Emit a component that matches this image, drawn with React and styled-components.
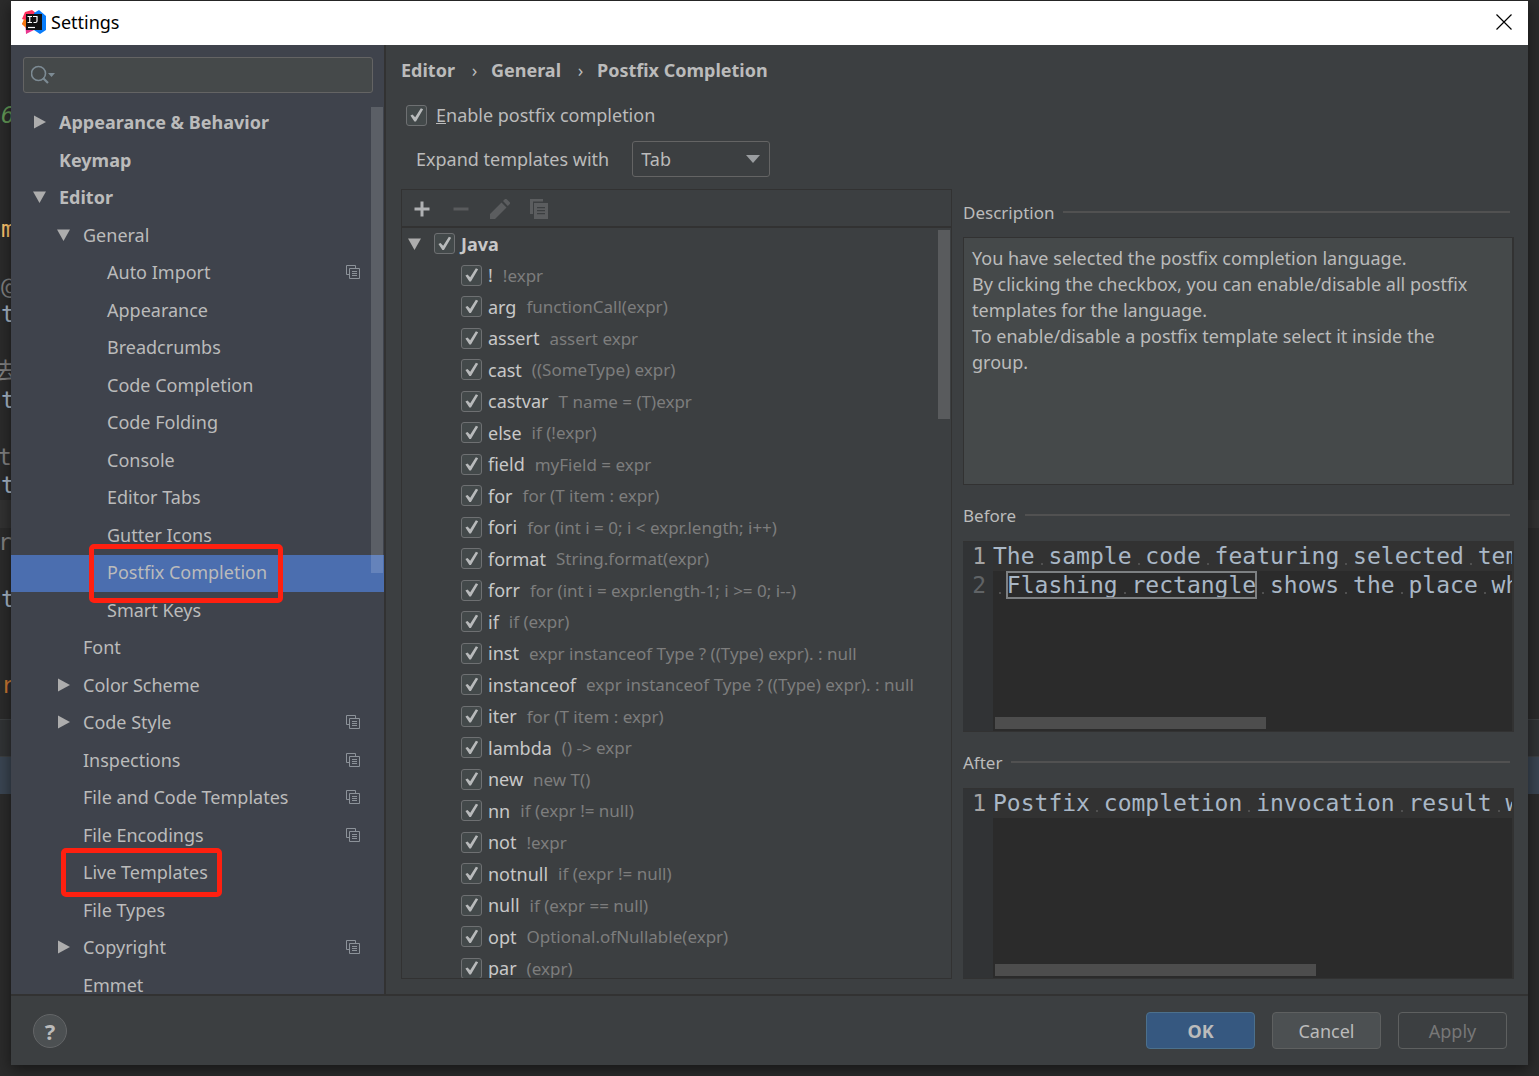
import React, { useState } from 'react';
import styled, { createGlobalStyle, css } from 'styled-components';

const tree = [
    { label: 'Appearance & Behavior', level: 0, arrow: 'right', bold: true },
    { label: 'Keymap', level: 0, bold: true },
    { label: 'Editor', level: 0, arrow: 'down', bold: true },
    { label: 'General', level: 1, arrow: 'down' },
    { label: 'Auto Import', level: 2, project: true },
    { label: 'Appearance', level: 2 },
    { label: 'Breadcrumbs', level: 2 },
    { label: 'Code Completion', level: 2 },
    { label: 'Code Folding', level: 2 },
    { label: 'Console', level: 2 },
    { label: 'Editor Tabs', level: 2 },
    { label: 'Gutter Icons', level: 2 },
    { label: 'Postfix Completion', level: 2, mark: 'large' },
    { label: 'Smart Keys', level: 2 },
    { label: 'Font', level: 1 },
    { label: 'Color Scheme', level: 1, arrow: 'right' },
    { label: 'Code Style', level: 1, arrow: 'right', project: true },
    { label: 'Inspections', level: 1, project: true },
    { label: 'File and Code Templates', level: 1, project: true },
    { label: 'File Encodings', level: 1, project: true },
    { label: 'Live Templates', level: 1, mark: 'small' },
    { label: 'File Types', level: 1 },
    { label: 'Copyright', level: 1, arrow: 'right', project: true },
    { label: 'Emmet', level: 1 },
];

const templates = [
    ['!', '!expr'],
    ['arg', 'functionCall(expr)'],
    ['assert', 'assert expr'],
    ['cast', '((SomeType) expr)'],
    ['castvar', 'T name = (T)expr'],
    ['else', 'if (!expr)'],
    ['field', 'myField = expr'],
    ['for', 'for (T item : expr)'],
    ['fori', 'for (int i = 0; i < expr.length; i++)'],
    ['format', 'String.format(expr)'],
    ['forr', 'for (int i = expr.length-1; i >= 0; i--)'],
    ['if', 'if (expr)'],
    ['inst', 'expr instanceof Type ? ((Type) expr). : null'],
    ['instanceof', 'expr instanceof Type ? ((Type) expr). : null'],
    ['iter', 'for (T item : expr)'],
    ['lambda', '() -> expr'],
    ['new', 'new T()'],
    ['nn', 'if (expr != null)'],
    ['not', '!expr'],
    ['notnull', 'if (expr != null)'],
    ['null', 'if (expr == null)'],
    ['opt', 'Optional.ofNullable(expr)'],
    ['par', '(expr)'],
];

// end of each editor line that shows left of the dialog
const behind = [
    { text: '6', color: '#629755', italic: true }, {}, {}, {},
    { text: 'm', color: '#ffc66d' }, {},
    { text: '@', color: '#808080' },
    { text: 't', color: '#a9b7c6' }, {},
    { text: '去', color: '#808080', indent: -6 },
    { text: 't', color: '#a9b7c6' }, {},
    { text: 't', color: '#808080', indent: -2 },
    { text: 't', color: '#a9b7c6' },
    { current: true },
    { text: 'r', color: '#808080', indent: -2 }, {},
    { text: 't', color: '#a9b7c6' }, {}, {},
    { text: 'r', color: '#cc7832' },
];

const Arrow = ({ dir }) => (
    <ArrowBox viewBox="0 0 18 18" aria-hidden="true">
        {dir === 'right' && <path d="M3 2.5 15 9 3 15.5z" />}
        {dir === 'down' && <path d="M2 3.500h13L8.500 15z" />}
    </ArrowBox>
);

const ProjectIcon = () => (
    <svg width="14" height="14" viewBox="0 0 14 14" fill="none" stroke="#8c9299" aria-hidden="true">
        <path d="M3 9.500H.5v-9h9V3" />
        <path d="M3.500 3.500h10v10h-10zM6 6.500h5M6 8.500h5M6 10.500h5" />
    </svg>
);

const Logo = () => (
    <svg width="24" height="24" viewBox="0 0 24 24" aria-hidden="true">
        <path d="M3 2 10 0l5 4-3 10-8 10 1-6-5-4 3-4-3-1z" fill="#fe315d" />
        <path d="M0 14 2 9l5 3v9L4 18z" fill="#f97a12" />
        <path d="M3.500 17 13 18l-1 2-8 4z" fill="#e8368f" />
        <path d="M12 3 17 0l7 6v14l-6 4-6-4z" fill="#087cfa" />
        <path d="M4 4h16v16H4z" fill="#111" />
        <path d="M6 17.500h7" stroke="#fff" strokeWidth="1.200" />
        <path d="M5.500 6.500h4.500M5.500 12.500h4.500M7.750 6.500v6M11 6.500h4v4.500q0 1.500-1.500 1.500H11.500" fill="none" stroke="#fff" strokeWidth="1.200" />
    </svg>
);

// words keep a faint dot in the blank between them, like the editor does
const Dotted = ({ children }) => children.split(' ').map((word, i) => (
    <React.Fragment key={i}>
        {i > 0 && <Blank> </Blank>}
        {word}
    </React.Fragment>
));

function Sidebar() {
    const [selected, setSelected] = useState('Postfix Completion');

    return (
        <SidePanel>
            <SearchBox>
                <svg width="28" height="20" viewBox="0 0 28 20" fill="none" stroke="#7d8b94" strokeWidth="1.600" aria-hidden="true">
                    <circle cx="7.500" cy="8.500" r="7" />
                    <path d="m12 13 5 5" strokeWidth="2.200" />
                    <path d="M17 8h7l-3.500 4z" fill="#7d8b94" stroke="none" />
                </svg>
                <input type="text" aria-label="Search settings" />
            </SearchBox>
            <Tree>
                {tree.map((item) => (
                    <TreeItem key={item.label + item.level}>
                        <TreeRow
                            type="button"
                            $level={item.level}
                            $bold={item.bold}
                            $active={item.label === selected}
                            onClick={() => setSelected(item.label)}
                        >
                            <Arrow dir={item.arrow} />
                            <TreeLabel>
                                {item.label}
                                {item.mark && <Mark $size={item.mark} />}
                            </TreeLabel>
                            {item.project && <ProjectIcon />}
                        </TreeRow>
                    </TreeItem>
                ))}
                <Thumb $top={2} $length={466} />
            </Tree>
        </SidePanel>
    );
}

function TemplateList() {
    return (
        <ListPanel>
            <Toolbar>
                <ToolButton type="button" aria-label="Add">
                    <svg width="20" height="20" viewBox="0 0 20 20" stroke="#afb1b3" strokeWidth="3"><path d="M10 2.500v15M2.500 10h15" /></svg>
                </ToolButton>
                <ToolButton type="button" aria-label="Remove" disabled>
                    <svg width="20" height="20" viewBox="0 0 20 20" stroke="#595b5d" strokeWidth="3"><path d="M2.500 10h15" /></svg>
                </ToolButton>
                <ToolButton type="button" aria-label="Edit" disabled>
                    <svg width="20" height="20" viewBox="0 0 20 20" fill="#5b5d5f"><path d="M0 20v-5L11.500 3.500l5 5L5 20zM13 2l2-2q1-.5 2 .5L19.500 3q1 1 .3 2l-2 2z" /></svg>
                </ToolButton>
                <ToolButton type="button" aria-label="Copy" disabled>
                    <svg width="20" height="20" viewBox="0 0 20 20" fill="#5b5d5f"><path d="M1 0h13v2.500H4V15H1z" /><path fillRule="evenodd" d="M5 4h14v16H5zM8 8v1.300h8V8zm0 3v1.300h8V11zm0 3v1.300h8V14z" /></svg>
                </ToolButton>
            </Toolbar>
            <Rows>
                <GroupRow>
                    <Arrow dir="down" />
                    <CheckLabel $bold>
                        <Check type="checkbox" defaultChecked />
                        Java
                    </CheckLabel>
                </GroupRow>
                {templates.map(([name, example]) => (
                    <TemplateRow key={name}>
                        <CheckLabel>
                            <Check type="checkbox" defaultChecked />
                            {name}
                            <Example>{example}</Example>
                        </CheckLabel>
                    </TemplateRow>
                ))}
                <Thumb $top={2} $length={189} />
            </Rows>
        </ListPanel>
    );
}

function App() {
    return (
        <Screen>
            <GlobalStyle />
            <Behind aria-hidden="true">
                {behind.map((line, i) => (
                    <BehindLine key={i} $current={line.current} $color={line.color} $italic={line.italic} $indent={line.indent}>
                        {line.text}
                    </BehindLine>
                ))}
                <BehindTabs />
                <BehindTool />
            </Behind>
            <Dialog>
                <TitleBar>
                    <Logo />
                    <h1>Settings</h1>
                    <CloseButton type="button" aria-label="Close">
                        <svg width="16" height="16" viewBox="0 0 16 16" stroke="#000" strokeWidth="1.200"><path d="m.5.5 15 15M15.500.5l-15 15" /></svg>
                    </CloseButton>
                </TitleBar>
                <Content>
                    <Sidebar />
                    <Main>
                        <Crumbs>
                            <span>Editor</span>
                            <Chevron />
                            <span>General</span>
                            <Chevron />
                            <span>Postfix Completion</span>
                        </Crumbs>
                        <EnableRow>
                            <Check type="checkbox" id="enable" defaultChecked />
                            <label htmlFor="enable"><u>E</u>nable postfix completion</label>
                        </EnableRow>
                        <ExpandRow>
                            <label htmlFor="expand">Expand templates with</label>
                            <SelectBox>
                                <select id="expand" defaultValue="Tab">
                                    <option>Tab</option>
                                    <option>Space</option>
                                    <option>Enter</option>
                                </select>
                                <svg width="14" height="8" viewBox="0 0 14 8" fill="#9a9da0" aria-hidden="true"><path d="M0 0h14L7 8z" /></svg>
                            </SelectBox>
                        </ExpandRow>
                        <Columns>
                            <TemplateList />
                            <Details>
                                <SectionTitle $first>Description</SectionTitle>
                                <Description>
                                    You have selected the postfix completion language.<br />
                                    By clicking the checkbox, you can enable/disable all postfix templates for the language.<br />
                                    To enable/disable a postfix template select it inside the group.
                                </Description>
                                <SectionTitle>Before</SectionTitle>
                                <Editor>
                                    <Gutter><b>1</b><span>2</span></Gutter>
                                    <Code>
                                        <CodeLine $current><Dotted>The sample code featuring selected template</Dotted></CodeLine>
                                        <CodeLine>
                                            <Blank> </Blank>
                                            <Flash><Dotted>Flashing rectangle</Dotted></Flash>
                                            <Dotted>{' shows the place where'}</Dotted>
                                        </CodeLine>
                                        <HorizontalThumb $length={271} />
                                    </Code>
                                </Editor>
                                <SectionTitle>After</SectionTitle>
                                <Editor>
                                    <Gutter><b>1</b></Gutter>
                                    <Code>
                                        <CodeLine $current><Dotted>Postfix completion invocation result will</Dotted></CodeLine>
                                        <HorizontalThumb $length={321} />
                                    </Code>
                                </Editor>
                            </Details>
                        </Columns>
                    </Main>
                </Content>
                <Footer>
                    <HelpButton type="button" aria-label="Help">?</HelpButton>
                    <Button type="button" $kind="primary">OK</Button>
                    <Button type="button">Cancel</Button>
                    <Button type="button" $kind="disabled" disabled>Apply</Button>
                </Footer>
            </Dialog>
        </Screen>
    );
}

export default App;

const GlobalStyle = createGlobalStyle`
    * {
        box-sizing: border-box;
    }
    body {
        margin: 0;
        background: #2b2b2b;
        color: #bbbbbb;
        font-family: 'Noto Sans', 'Open Sans', sans-serif;
        font-size: 18px;
    }
    button, input, select {
        font: inherit;
        color: inherit;
    }
`

const mono = css`
    font-family: 'DejaVu Sans Mono', 'Noto Sans CJK SC', monospace;
    font-size: 23px;
`

const Screen = styled.div`
    position: relative;
    display: flex;
    height: 100vh;
    min-height: 700px;
    padding: 1px 11px 11px;
    overflow: hidden;
`

const Behind = styled.div`
    position: absolute;
    inset: 0;
    padding-top: 101px;
    overflow: hidden;
`
const BehindLine = styled.div`
    ${mono}
    height: 28px;
    line-height: 28px;
    text-indent: ${props => props.$indent || 1}px;
    color: ${props => props.$color};
    font-style: ${props => props.$italic ? 'italic' : 'normal'};
    background: ${props => props.$current ? '#323232' : 'none'};

    &:nth-child(even) {
        height: 29px;
    }
`
const BehindTabs = styled.div`
    height: 38px;
    margin-top: 20px;
    border: solid #3c3f41;
    border-width: 1px 0;
    background: #313335;
`
const BehindTool = styled.div`
    height: 37px;
    background: #3a4552;
`

const Dialog = styled.div`
    position: relative;
    display: flex;
    flex: 1;
    flex-direction: column;
    min-width: 0;
    background: #3c3f41;
    box-shadow: 0 4px 14px rgba(0, 0, 0, .5);
`
const TitleBar = styled.div`
    display: flex;
    align-items: center;
    gap: 5px;
    height: 44px;
    flex-shrink: 0;
    padding: 0 16px 2px 11px;
    background: #fff;
    color: #000;

    h1 {
        margin: 0;
        font-size: 18px;
        font-weight: 400;
    }
`
const CloseButton = styled.button`
    display: flex;
    margin-left: auto;
    padding: 0;
    border: 0;
    background: none;
`
const Content = styled.div`
    display: flex;
    flex: 1;
    min-height: 0;
`

const SidePanel = styled.nav`
    display: flex;
    flex-direction: column;
    width: 375px;
    flex-shrink: 0;
    padding-top: 12px;
    border-right: 2px solid #323232;
    background: #3f434c;
`
const SearchBox = styled.label`
    display: flex;
    align-items: center;
    height: 36px;
    flex-shrink: 0;
    margin: 0 11px 0 12px;
    padding: 0 7px;
    border: 1px solid #646464;
    border-radius: 3px;
    background: #45494a;

    input {
        flex: 1;
        min-width: 0;
        border: 0;
        outline: 0;
        background: none;
    }
`
const Tree = styled.ul`
    position: relative;
    flex: 1;
    min-height: 0;
    margin: 12px 0 0;
    padding: 0;
    overflow: hidden;
    list-style: none;
`
const TreeItem = styled.li`
    height: 37px;

    &:nth-child(even) {
        height: 38px;
    }
`
const TreeRow = styled.button`
    display: flex;
    align-items: center;
    gap: 10px;
    width: 100%;
    height: 100%;
    padding: 0 24px 3px ${props => 20 + props.$level * 24}px;
    border: 0;
    background: ${props => props.$active ? '#4b6eaf' : 'none'};
    font-weight: ${props => props.$bold ? 700 : 400};
    text-align: left;
`
const TreeLabel = styled.span`
    position: relative;
    margin-right: auto;
    white-space: nowrap;
`
const Mark = styled.span`
    position: absolute;
    inset: ${props => props.$size === 'large' ? '-16px -16px -19px -18px' : '-12px -14px -13px -22px'};
    border: 5px solid #ff2010;
    border-radius: 5px;
    pointer-events: none;
    z-index: 1;
`
const ArrowBox = styled.svg`
    width: 18px;
    height: 18px;
    flex-shrink: 0;
    fill: #adadad;
`
const Thumb = styled.div`
    position: absolute;
    top: ${props => props.$top}px;
    right: 1px;
    width: 12px;
    height: ${props => props.$length}px;
    background: rgba(255, 255, 255, .15);
`

const Main = styled.main`
    display: flex;
    flex: 1;
    flex-direction: column;
    min-width: 0;
    padding: 12px 14px 15px 15px;
`
const Crumbs = styled.div`
    display: flex;
    align-items: center;
    height: 26px;
    font-weight: 700;
`
const Chevron = styled.span`
    width: 36px;
    padding-left: 3px;
    font-weight: 400;
    text-align: center;

    &::before {
        content: '›';
    }
`
const EnableRow = styled.div`
    display: flex;
    align-items: center;
    gap: 9px;
    height: 22px;
    margin: 21px 0 15px 5px;
`
const ExpandRow = styled.div`
    display: flex;
    align-items: center;
    gap: 23px;
    margin: 0 0 12px 15px;
`
const SelectBox = styled.div`
    position: relative;

    select {
        appearance: none;
        display: block;
        width: 138px;
        height: 36px;
        padding: 0 8px;
        border: 1px solid #646464;
        border-radius: 3px;
        background: #3c3f41;
    }
    svg {
        position: absolute;
        top: 14px;
        right: 10px;
        pointer-events: none;
    }
`
const Columns = styled.div`
    display: grid;
    grid-template-columns: minmax(0, 1fr) minmax(0, 1fr);
    grid-template-rows: minmax(0, 1fr);
    flex: 1;
    gap: 11px;
    min-height: 0;
`

const ListPanel = styled.section`
    display: flex;
    flex-direction: column;
    border: 1px solid #323232;
`
const Toolbar = styled.div`
    display: flex;
    align-items: center;
    gap: 19px;
    height: 38px;
    flex-shrink: 0;
    padding: 2px 0 0 10px;
    border-bottom: 2px solid #323232;
`
const ToolButton = styled.button`
    display: flex;
    padding: 0;
    border: 0;
    background: none;
`
const Rows = styled.div`
    position: relative;
    flex: 1;
    min-height: 0;
    overflow: hidden;
`
const GroupRow = styled.div`
    display: flex;
    align-items: center;
    gap: 10px;
    height: 31px;
    padding-left: 4px;
`
const TemplateRow = styled.div`
    display: flex;
    align-items: center;
    height: 31px;
    padding-left: 59px;

    &:nth-child(even) {
        height: 32px;
    }
`
const CheckLabel = styled.label`
    display: flex;
    align-items: center;
    gap: 6px;
    color: #c8c8c8;
    font-weight: ${props => props.$bold ? 700 : 400};
    white-space: nowrap;
`
const Example = styled.span`
    padding-left: 4px;
    color: #7d7d7d;
    font-size: 17px;
`
const Check = styled.input`
    appearance: none;
    width: 21px;
    height: 21px;
    flex-shrink: 0;
    margin: 0;
    border: 1px solid #6e7072;
    border-radius: 3px;
    background: #43494a;

    &:checked::before {
        content: '';
        display: block;
        width: 19px;
        height: 19px;
        background: #b8babb;
        clip-path: polygon(18% 52%, 29% 47%, 43% 62%, 73% 14%, 85% 20%, 47% 84%, 39% 84%);
    }
`

const Details = styled.section`
    display: flex;
    flex-direction: column;
`
const SectionTitle = styled.h2`
    display: flex;
    align-items: center;
    gap: 9px;
    height: ${props => props.$first ? 48 : 56}px;
    flex-shrink: 0;
    margin: 0;
    padding: ${props => props.$first ? '0 4px 2px 0' : '4px 4px 0 0'};
    font-size: 17px;
    font-weight: 400;

    &::after {
        content: '';
        flex: 1;
        height: 2px;
        background: #515151;
    }
`
const Description = styled.div`
    flex: 1;
    min-height: 0;
    padding: 7px 20px 8px 8px;
    border: 1px solid #323232;
    border-right-width: 2px;
    background: #45494a;
    line-height: 26px;
`
const Editor = styled.div`
    ${mono}
    display: flex;
    height: 191px;
    flex-shrink: 0;
    border: solid #323232;
    border-width: 1px 2px 1px 0;
    background: #2b2b2b;
    line-height: 29px;
`
const Gutter = styled.div`
    display: flex;
    flex-direction: column;
    align-items: flex-end;
    width: 30px;
    flex-shrink: 0;
    padding-right: 7px;
    background: #313335;
    color: #606366;

    b {
        color: #a4a3a3;
        font-weight: 400;
    }
`
const Code = styled.div`
    position: relative;
    flex: 1;
    min-width: 0;
    overflow: hidden;
    color: #a9b7c6;
`
const CodeLine = styled.div`
    height: 29px;
    background: ${props => props.$current ? '#323232' : 'none'};
    white-space: pre;
`
const Blank = styled.span`
    background: linear-gradient(#505050, #505050) no-repeat 6px 20px / 2px 2px;
`
const Flash = styled.span`
    outline: 2px solid #7d8082;
    outline-offset: -1px;
`
const HorizontalThumb = styled.div`
    position: absolute;
    left: 2px;
    bottom: 2px;
    width: ${props => props.$length}px;
    height: 12px;
    background: #4d4d4d;
`

const Footer = styled.footer`
    display: flex;
    align-items: center;
    gap: 17px;
    height: 71px;
    flex-shrink: 0;
    padding: 0 21px 0 22px;
    border-top: 2px solid #323232;
`
const HelpButton = styled.button`
    width: 34px;
    height: 34px;
    margin-right: auto;
    padding: 0;
    border: 1px solid #636567;
    border-radius: 50%;
    background: #4c5052;
    font-size: 22px;
    font-weight: 700;
    line-height: 30px;
`
const Button = styled.button`
    width: 109px;
    height: 37px;
    padding: 0;
    border: 1px solid #5e6060;
    border-radius: 4px;
    background: #4c5052;
    ${props => props.$kind === 'primary' && css`
        border-color: #4c708c;
        background: #365880;
        font-weight: 700;
    `}
    ${props => props.$kind === 'disabled' && css`
        background: none;
        color: #777777;
    `}
`
